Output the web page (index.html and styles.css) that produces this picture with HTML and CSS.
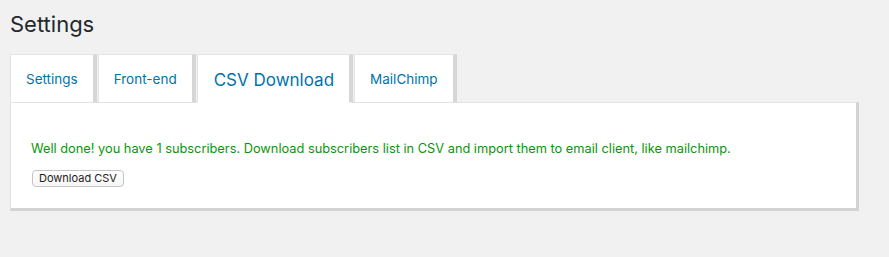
FILE: index.html
```html
<!DOCTYPE html>
<html lang="en">
<head>
<meta charset="utf-8">
<title>Settings</title>
<link rel="stylesheet" href="styles.css">
</head>
<body>
<div class="wrap">
  <h1 class="title">Settings</h1>
  <nav class="tabs">
    <a class="tab" href="#">Settings</a>
    <a class="tab" href="#">Front-end</a>
    <a class="tab tab-active" href="#">CSV Download</a>
    <a class="tab" href="#">MailChimp</a>
  </nav>
  <div class="panel">
    <p class="notice">Well done! you have 1 subscribers. Download subscribers list in CSV and import them to email client, like mailchimp.</p>
    <button class="btn" type="button">Download CSV</button>
  </div>
</div>
</body>
</html>
```
FILE: styles.css
```css
html, body {
  margin: 0;
  background: #f1f1f1;
}
body {
  font-family: Inter, "Noto Sans", sans-serif;
  color: #23282d;
}
.wrap {
  padding: 0 30px 0 10px;
}
.title {
  margin: 0;
  padding: 10px 0 0;
  height: 54px;
  box-sizing: border-box;
  font-size: 22px;
  font-weight: 400;
  line-height: 29px;
  color: #23282d;
}
.tabs {
  display: flex;
  align-items: flex-end;
  gap: 1px;
  position: relative;
  z-index: 1;
}
.tab {
  display: flex;
  align-items: center;
  height: 47px;
  padding: 0 15px;
  background: #fff;
  border: 1px solid #e3e3e3;
  border-right: 4px solid #d6d6d6;
  color: #0073aa;
  text-decoration: none;
  font-size: 13.5px;
  margin-bottom: -1px;
}
.tab-active {
  font-size: 17px;
  padding: 2px 15px 0 16px;
  border-bottom-color: #fff;
  height: 45px;
}
.panel {
  background: #fff;
  border: 1px solid #e3e3e3;
  border-right: 3px solid #d3d3d3;
  border-bottom: 3px solid #d3d3d3;
  padding: 34px 20px 21px;
}
.notice {
  margin: 0 0 5px;
  color: #0a960a;
  font-size: 12.8px;
  line-height: 24px;
}
.btn {
  font-family: Inter, "Noto Sans", sans-serif;
  font-size: 11px;
  height: 17px;
  padding: 0 6px;
  margin-left: 1px;
  background: linear-gradient(#fff, #f6f6f6);
  border: 1px solid #c4c4c4;
  border-radius: 4px;
  color: #222;
  line-height: 15px;
}
```
